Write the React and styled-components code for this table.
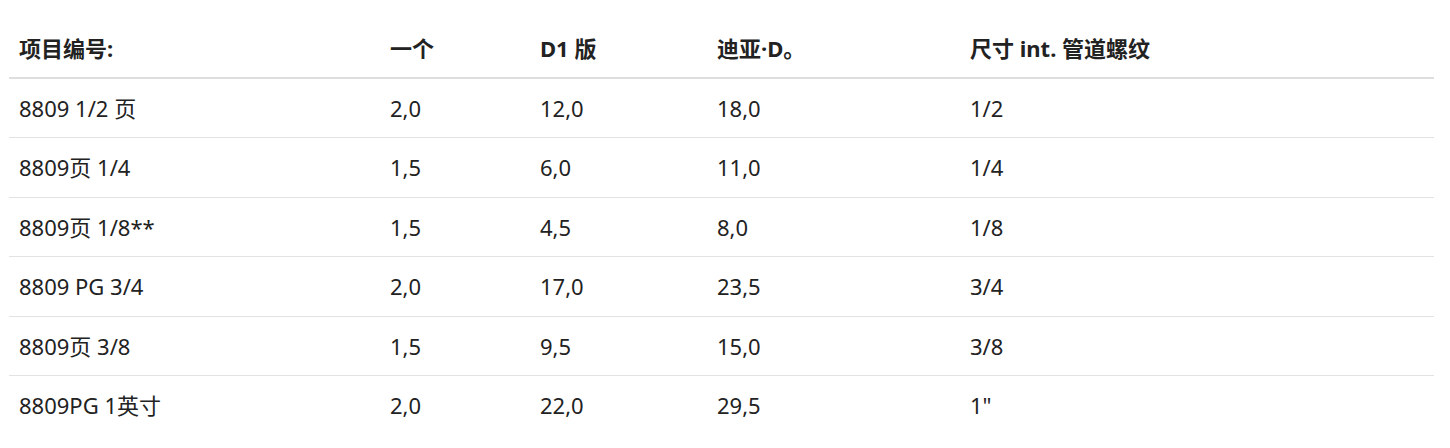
import styled, { createGlobalStyle } from "styled-components";

const GlobalStyle = createGlobalStyle`
  body {
    margin: 0;
    background: #fff;
    font-family: "Noto Sans", "Noto Sans CJK SC", sans-serif;
    color: #222;
  }
`;

const Wrap = styled.div`
  padding: 19px 16px 0 9px;
`;

const Table = styled.table`
  width: 1425px;
  border-collapse: collapse;
  table-layout: fixed;
  font-size: 22px;
`;

const Th = styled.th`
  text-align: left;
  font-weight: 700;
  padding: 16px 10px;
  line-height: 26px;
  border-bottom: 2px solid #dedede;
  white-space: nowrap;
`;

const Row = styled.tr`
  border-bottom: ${p => (p.$last ? "none" : "1px solid #e2e2e2")};
`;

const Td = styled.td`
  padding: 16px 10px;
  line-height: 26.4px;
  white-space: nowrap;
`;

const columns = [
  { title: "项目编号:", width: 371 },
  { title: "一个", width: 150 },
  { title: "D1 版", width: 177 },
  { title: "迪亚·D。", width: 253 },
  { title: "尺寸 int. 管道螺纹", width: 474 },
];

const rows = [
  ["8809 1/2 页", "2,0", "12,0", "18,0", "1/2"],
  ["8809页 1/4", "1,5", "6,0", "11,0", "1/4"],
  ["8809页 1/8**", "1,5", "4,5", "8,0", "1/8"],
  ["8809 PG 3/4", "2,0", "17,0", "23,5", "3/4"],
  ["8809页 3/8", "1,5", "9,5", "15,0", "3/8"],
  ["8809PG 1英寸", "2,0", "22,0", "29,5", "1\""],
];

export default function App() {
  return (
    <Wrap>
      <GlobalStyle />
      <Table>
        <colgroup>
          {columns.map(c => (
            <col key={c.title} style={{ width: c.width }} />
          ))}
        </colgroup>
        <thead>
          <tr>
            {columns.map(c => (
              <Th key={c.title}>{c.title}</Th>
            ))}
          </tr>
        </thead>
        <tbody>
          {rows.map((r, i) => (
            <Row key={r[0]} $last={i === rows.length - 1}>
              {r.map((cell, j) => (
                <Td key={j}>{cell}</Td>
              ))}
            </Row>
          ))}
        </tbody>
      </Table>
    </Wrap>
  );
}
